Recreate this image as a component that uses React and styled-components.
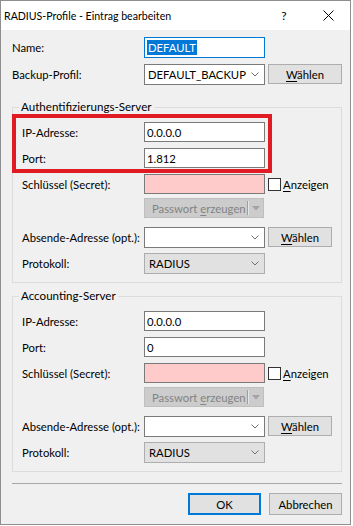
import React from "react";
import styled, { createGlobalStyle } from "styled-components";

const GlobalStyle = createGlobalStyle`
  html, body {
    margin: 0;
    padding: 0;
    background: #ffffff;
  }
  body {
    font-family: Lato, "Segoe UI", sans-serif;
    font-size: 11.3px;
    color: #000000;
  }
  * {
    box-sizing: border-box;
  }
`;

const Window = styled.div`
  position: relative;
  width: 351px;
  height: 525px;
  border: 1px solid #8e8e8e;
  background: #f0f0f0;
  display: flex;
  flex-direction: column;
`;

const TitleBar = styled.div`
  height: 29px;
  background: #ffffff;
  display: flex;
  align-items: center;
  padding-left: 3px;
  flex-shrink: 0;
`;

const Title = styled.div`
  flex: 1;
  font-size: 10.6px;
  white-space: nowrap;
`;

const CaptionButton = styled.div`
  width: 44px;
  height: 29px;
  display: flex;
  align-items: center;
  justify-content: center;
  font-size: 12px;
  color: #000;
`;

const Body = styled.div`
  flex: 1;
  padding: 7px 8px 0 11px;
  display: flex;
  flex-direction: column;
`;

const Row = styled.div`
  display: flex;
  align-items: center;
  height: ${(p) => p.h || 20}px;
  margin-top: ${(p) => p.mt || 0}px;
`;

const Label = styled.div`
  width: ${(p) => p.w}px;
  flex-shrink: 0;
  white-space: nowrap;
`;

const Field = styled.div`
  width: 121px;
  height: 100%;
  border: 1px solid ${(p) => (p.focused ? "#0078d7" : "#7a7a7a")};
  background: ${(p) => (p.pink ? "#ffcaca" : "#ffffff")};
  padding-left: 2px;
  display: flex;
  align-items: center;
  white-space: nowrap;
`;

const Selected = styled.span`
  background: #0078d7;
  color: #ffffff;
  padding: 0 1px;
  line-height: 15px;
`;

const Combo = styled.div`
  width: 121px;
  height: 100%;
  border: 1px solid ${(p) => (p.list ? "#adadad" : "#7a7a7a")};
  background: ${(p) => (p.list ? "#e1e1e1" : "#ffffff")};
  padding: 0 5px 0 ${(p) => (p.list ? 4 : 3)}px;
  display: flex;
  align-items: center;
  justify-content: space-between;
  white-space: nowrap;
`;

const Button = styled.div`
  width: ${(p) => p.w}px;
  height: ${(p) => p.h || 20}px;
  margin-left: ${(p) => p.ml || 0}px;
  align-self: flex-start;
  border: ${(p) => (p.primary ? "2px solid #0078d7" : "1px solid #adadad")};
  background: #e1e1e1;
  display: flex;
  align-items: center;
  justify-content: center;
  white-space: nowrap;
`;

const U = styled.span`
  text-decoration: underline;
  text-underline-offset: 2px;
`;

const CheckBox = styled.div`
  width: 13px;
  height: 13px;
  margin-left: 3px;
  border: 1px solid #333333;
  background: #ffffff;
  flex-shrink: 0;
`;

const CheckText = styled.span`
  margin-left: 2px;
`;

const SplitButton = styled.div`
  width: 120px;
  height: 100%;
  border: 1px solid #bfbfbf;
  background: #cccccc;
  color: #838383;
  display: flex;
  align-items: center;
`;

const SplitMain = styled.div`
  flex: 1;
  padding-left: 7px;
  white-space: nowrap;
`;

const SplitDivider = styled.div`
  width: 2px;
  height: 14px;
  border-left: 1px solid #9f9f9f;
  border-right: 1px solid #e6e6e6;
`;

const SplitArrow = styled.div`
  width: 14px;
  display: flex;
  justify-content: center;
`;

const Group = styled.fieldset`
  margin: ${(p) => p.mt}px 0 0 0;
  padding: 7px 9px 8px 9px;
  border: 1px solid #dcdcdc;
  min-width: 0;
`;

const GroupTitle = styled.legend`
  padding: 0 2px;
  margin-left: -3px;
  line-height: 16px;
  font-size: 11.6px;
`;

const Separator = styled.div`
  height: 1px;
  background: #a8a8a8;
  margin-top: 11px;
`;

const ButtonBar = styled.div`
  display: flex;
  justify-content: flex-end;
  gap: 8px;
  margin-top: 9px;
`;

const Highlight = styled.div`
  position: absolute;
  left: 11px;
  top: 113px;
  width: 260px;
  height: 59px;
  border: 4px solid #e01b24;
  pointer-events: none;
`;

function Chevron() {
  return (
    <svg width="8" height="5" viewBox="0 0 8 5">
      <polyline points="0.5,0.5 4,4 7.5,0.5" fill="none" stroke="#707070" strokeWidth="1" />
    </svg>
  );
}

function CloseIcon() {
  return (
    <svg width="11" height="11" viewBox="0 0 11 11">
      <path d="M0.5 0.5 L10.5 10.5 M10.5 0.5 L0.5 10.5" stroke="#000" strokeWidth="1" />
    </svg>
  );
}

function ServerGroup({ title, ip, port, mt }) {
  return (
    <Group mt={mt}>
      <GroupTitle>{title}</GroupTitle>
      <Row>
        <Label w={122}>IP-Adresse:</Label>
        <Field>{ip}</Field>
      </Row>
      <Row mt={6}>
        <Label w={122}>Port:</Label>
        <Field>{port}</Field>
      </Row>
      <Row mt={6}>
        <Label w={122}>Schlüssel (Secret):</Label>
        <Field pink />
        <CheckBox />
        <CheckText>
          <U>A</U>nzeigen
        </CheckText>
      </Row>
      <Row mt={4}>
        <Label w={122} />
        <SplitButton>
          <SplitMain>
            Passwort <U>e</U>rzeugen
          </SplitMain>
          <SplitDivider />
          <SplitArrow>
            <svg width="8" height="5" viewBox="0 0 8 5">
              <polygon points="0,0 8,0 4,4.5" fill="#a3a3a3" />
            </svg>
          </SplitArrow>
        </SplitButton>
      </Row>
      <Row mt={9} h={21}>
        <Label w={122}>Absende-Adresse (opt.):</Label>
        <Combo>
          <span />
          <Chevron />
        </Combo>
        <Button w={64} ml={3}>
          <span>
            <U>W</U>ählen
          </span>
        </Button>
      </Row>
      <Row mt={5} h={21}>
        <Label w={122}>Protokoll:</Label>
        <Combo list>
          <span>RADIUS</span>
          <Chevron />
        </Combo>
      </Row>
    </Group>
  );
}

export default function App() {
  return (
    <>
      <GlobalStyle />
      <Window>
        <TitleBar>
          <Title>RADIUS-Profile - Eintrag bearbeiten</Title>
          <CaptionButton>?</CaptionButton>
          <CaptionButton>
            <CloseIcon />
          </CaptionButton>
        </TitleBar>
        <Body>
          <Row h={21}>
            <Label w={132}>Name:</Label>
            <Field focused>
              <Selected>DEFAULT</Selected>
            </Field>
          </Row>
          <Row h={21} mt={6}>
            <Label w={132}>Backup-Profil:</Label>
            <Combo>
              <span>DEFAULT_BACKUP</span>
              <Chevron />
            </Combo>
            <Button w={74} ml={3}>
              <span>
                <U>W</U>ählen
              </span>
            </Button>
          </Row>
          <ServerGroup title="Authentifizierungs-Server" ip="0.0.0.0" port="1.812" mt={14} />
          <ServerGroup title="Accounting-Server" ip="0.0.0.0" port="0" mt={5} />
          <Separator />
          <ButtonBar>
            <Button w={73} h={22} primary>
              OK
            </Button>
            <Button w={73} h={22}>
              Abbrechen
            </Button>
          </ButtonBar>
        </Body>
        <Highlight />
      </Window>
    </>
  );
}
